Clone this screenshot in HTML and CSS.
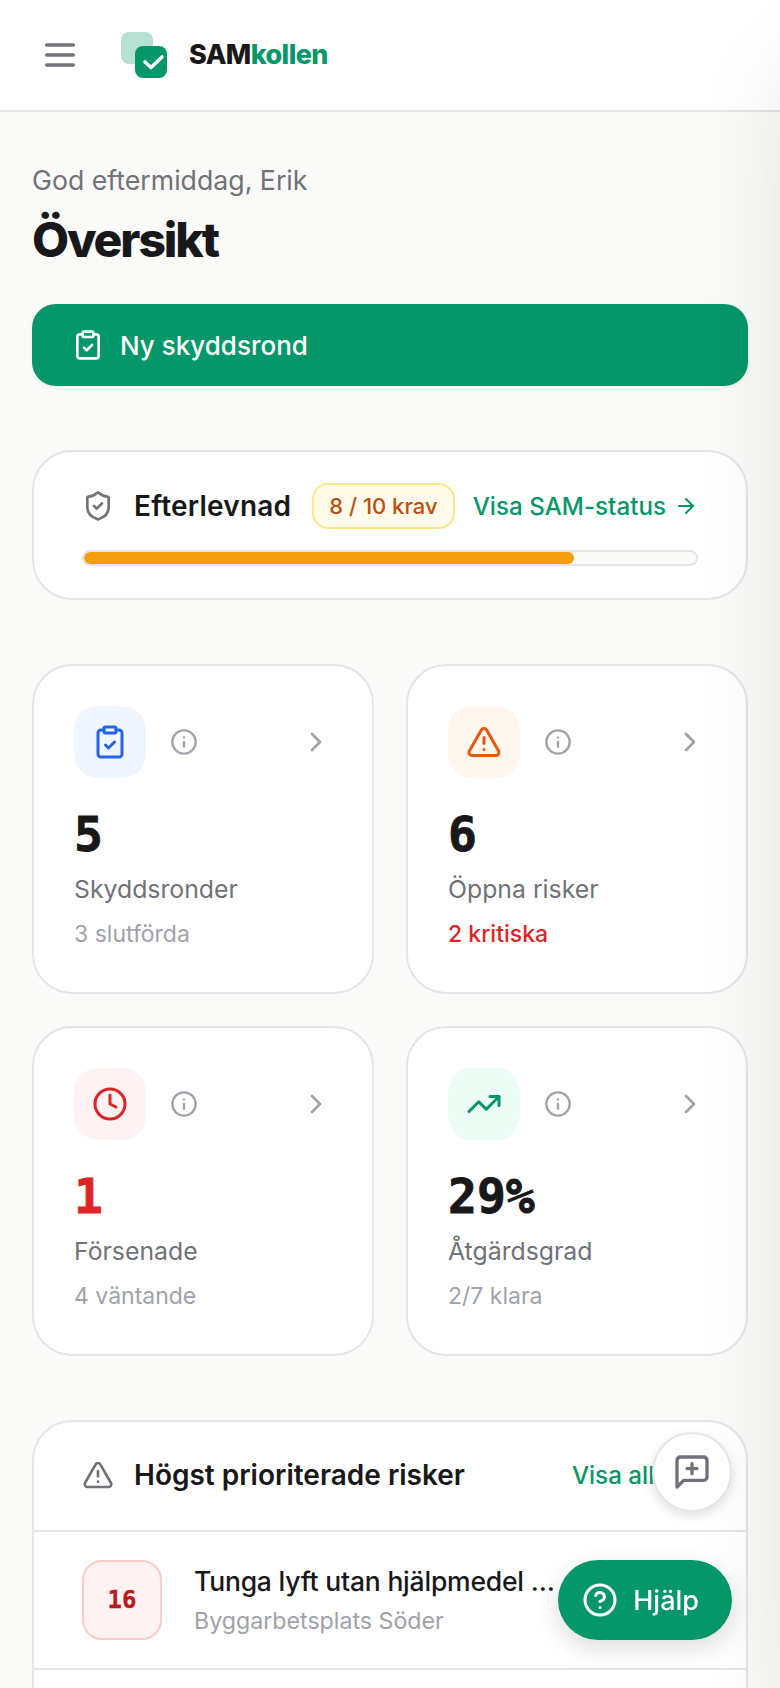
FILE: index.html
```html
<!DOCTYPE html>
<html lang="sv">
<head>
    <meta charset="UTF-8">
    <meta name="viewport" content="width=device-width, initial-scale=1.0">
    <title>Översikt | SAMkollen</title>
    <link rel="stylesheet" href="styles.css">
</head>
<body>
    <header class="top-bar">
        <button class="menu-btn" aria-label="Meny">
            <svg class="icon icon-40" viewBox="0 0 24 24"><path d="M4 12h16"/><path d="M4 6h16"/><path d="M4 18h16"/></svg>
        </button>
        <a class="logo" href="#">
            <svg class="logo-mark" viewBox="0 0 46 46">
                <rect width="32" height="32" rx="8" fill="#b5e0d2"/>
                <rect x="14" y="14" width="32" height="32" rx="8" fill="#059669"/>
                <path d="M24 30l6 5.5 11-10.5" fill="none" stroke="#fff" stroke-width="3.6" stroke-linecap="round" stroke-linejoin="round"/>
            </svg>
            <span class="logo-text">SAM<span class="logo-accent">kollen</span></span>
        </a>
    </header>

    <main class="page">
        <p class="greeting">God eftermiddag, Erik</p>
        <h1 class="page-title">Översikt</h1>

        <button class="primary-btn">
            <svg class="icon icon-32" viewBox="0 0 24 24"><rect x="8" y="2" width="8" height="4" rx="1"/><path d="M16 4h2a2 2 0 0 1 2 2v14a2 2 0 0 1-2 2H6a2 2 0 0 1-2-2V6a2 2 0 0 1 2-2h2"/><path d="m9 14 2 2 4-4"/></svg>
            Ny skyddsrond
        </button>

        <section class="card compliance">
            <div class="compliance-head">
                <svg class="icon icon-32 muted" viewBox="0 0 24 24"><path d="M20 13c0 5-3.5 7.5-7.66 8.95a1 1 0 0 1-.67-.01C7.5 20.5 4 18 4 13V6a1 1 0 0 1 1-1c2 0 4.5-1.2 6.24-2.72a1.17 1.17 0 0 1 1.52 0C14.51 3.81 17 5 19 5a1 1 0 0 1 1 1z"/><path d="m9 12 2 2 4-4"/></svg>
                <h2 class="compliance-title">Efterlevnad</h2>
                <span class="pill">8 / 10 krav</span>
                <a class="link status-link" href="#">Visa SAM-status
                    <svg class="icon icon-24" viewBox="0 0 24 24"><path d="M5 12h14"/><path d="m12 5 7 7-7 7"/></svg>
                </a>
            </div>
            <div class="progress"><div class="progress-fill" style="width: 80%"></div></div>
        </section>

        <section class="stats">
            <a class="card stat" href="#">
                <div class="stat-top">
                    <span class="stat-icon bg-blue">
                        <svg class="icon icon-36" viewBox="0 0 24 24"><rect x="8" y="2" width="8" height="4" rx="1"/><path d="M16 4h2a2 2 0 0 1 2 2v14a2 2 0 0 1-2 2H6a2 2 0 0 1-2-2V6a2 2 0 0 1 2-2h2"/><path d="m9 14 2 2 4-4"/></svg>
                    </span>
                    <svg class="icon icon-28 info" viewBox="0 0 24 24"><circle cx="12" cy="12" r="10"/><path d="M12 16v-4"/><path d="M12 8h.01"/></svg>
                    <svg class="icon icon-32 chevron" viewBox="0 0 24 24"><path d="m9 18 6-6-6-6"/></svg>
                </div>
                <div class="stat-value">5</div>
                <div class="stat-label">Skyddsronder</div>
                <div class="stat-sub">3 slutförda</div>
            </a>
            <a class="card stat" href="#">
                <div class="stat-top">
                    <span class="stat-icon bg-orange">
                        <svg class="icon icon-36" viewBox="0 0 24 24"><path d="m21.73 18-8-14a2 2 0 0 0-3.48 0l-8 14A2 2 0 0 0 4 21h16a2 2 0 0 0 1.73-3"/><path d="M12 9v4"/><path d="M12 17h.01"/></svg>
                    </span>
                    <svg class="icon icon-28 info" viewBox="0 0 24 24"><circle cx="12" cy="12" r="10"/><path d="M12 16v-4"/><path d="M12 8h.01"/></svg>
                    <svg class="icon icon-32 chevron" viewBox="0 0 24 24"><path d="m9 18 6-6-6-6"/></svg>
                </div>
                <div class="stat-value">6</div>
                <div class="stat-label">Öppna risker</div>
                <div class="stat-sub critical">2 kritiska</div>
            </a>
            <a class="card stat" href="#">
                <div class="stat-top">
                    <span class="stat-icon bg-red">
                        <svg class="icon icon-36" viewBox="0 0 24 24"><circle cx="12" cy="12" r="10"/><path d="M12 6v6l4 2"/></svg>
                    </span>
                    <svg class="icon icon-28 info" viewBox="0 0 24 24"><circle cx="12" cy="12" r="10"/><path d="M12 16v-4"/><path d="M12 8h.01"/></svg>
                    <svg class="icon icon-32 chevron" viewBox="0 0 24 24"><path d="m9 18 6-6-6-6"/></svg>
                </div>
                <div class="stat-value danger">1</div>
                <div class="stat-label">Försenade</div>
                <div class="stat-sub">4 väntande</div>
            </a>
            <a class="card stat" href="#">
                <div class="stat-top">
                    <span class="stat-icon bg-green">
                        <svg class="icon icon-36" viewBox="0 0 24 24"><path d="M22 7 13.5 15.5 8.5 10.5 2 17"/><path d="M16 7h6v6"/></svg>
                    </span>
                    <svg class="icon icon-28 info" viewBox="0 0 24 24"><circle cx="12" cy="12" r="10"/><path d="M12 16v-4"/><path d="M12 8h.01"/></svg>
                    <svg class="icon icon-32 chevron" viewBox="0 0 24 24"><path d="m9 18 6-6-6-6"/></svg>
                </div>
                <div class="stat-value">29%</div>
                <div class="stat-label">Åtgärdsgrad</div>
                <div class="stat-sub">2/7 klara</div>
            </a>
        </section>

        <section class="card risks">
            <div class="risks-head">
                <svg class="icon icon-32 muted" viewBox="0 0 24 24"><path d="m21.73 18-8-14a2 2 0 0 0-3.48 0l-8 14A2 2 0 0 0 4 21h16a2 2 0 0 0 1.73-3"/><path d="M12 9v4"/><path d="M12 17h.01"/></svg>
                <h2 class="risks-title">Högst prioriterade risker</h2>
                <a class="link all-link" href="#">Visa alla
                    <svg class="icon icon-24" viewBox="0 0 24 24"><path d="M5 12h14"/><path d="m12 5 7 7-7 7"/></svg>
                </a>
            </div>
            <div class="risk-row">
                <span class="risk-score">16</span>
                <div class="risk-text">
                    <div class="risk-name">Tunga lyft utan hjälpmedel vid materialhantering</div>
                    <div class="risk-place">Byggarbetsplats Söder</div>
                </div>
            </div>
            <div class="risk-row"></div>
        </section>
    </main>

    <div class="offscreen-panel"></div>

    <button class="feedback-btn" aria-label="Lämna feedback">
        <svg class="icon icon-40" viewBox="0 0 24 24"><path d="M21 15a2 2 0 0 1-2 2H7l-4 4V5a2 2 0 0 1 2-2h14a2 2 0 0 1 2 2z"/><path d="M12 7v6"/><path d="M9 10h6"/></svg>
    </button>
    <button class="help-btn">
        <svg class="icon icon-36" viewBox="0 0 24 24"><circle cx="12" cy="12" r="10"/><path d="M9.09 9a3 3 0 0 1 5.83 1c0 2-3 3-3 3"/><path d="M12 17h.01"/></svg>
        Hjälp
    </button>
</body>
</html>
```

FILE: styles.css
```css
:root {
    --green: #059669;
    --text: #18181b;
    --muted: #71717a;
    --faint: #a1a1aa;
    --line: #e5e5e5;
    --bg: #fafaf8;
    --mono: "DejaVu Sans Mono", monospace;
}

* {
    margin: 0;
    padding: 0;
    box-sizing: border-box;
}

html, body {
    height: 1688px;
    overflow: hidden;
}

body {
    background: var(--bg);
    color: var(--text);
    font-family: Inter, "Noto Sans", sans-serif;
}

a {
    color: inherit;
    text-decoration: none;
}

button {
    border: none;
    font-family: inherit;
    cursor: pointer;
}

.icon {
    display: block;
    flex-shrink: 0;
    fill: none;
    stroke: currentColor;
    stroke-width: 2;
    stroke-linecap: round;
    stroke-linejoin: round;
}

.icon-24 { width: 24px; height: 24px; }
.icon-28 { width: 28px; height: 28px; }
.icon-32 { width: 32px; height: 32px; }
.icon-36 { width: 36px; height: 36px; }
.icon-40 { width: 40px; height: 40px; }

.muted { color: var(--muted); }

/* Top bar */
.top-bar {
    height: 112px;
    background: #fff;
    border-bottom: 2px solid var(--line);
    display: flex;
    align-items: center;
    padding-left: 40px;
    gap: 41px;
}

.menu-btn {
    background: none;
    color: var(--muted);
}

.logo {
    display: flex;
    align-items: center;
    gap: 22px;
}

.logo-mark {
    width: 46px;
    height: 46px;
}

.logo-text {
    font-size: 27px;
    font-weight: 800;
    letter-spacing: -0.6px;
    margin-top: -2px;
}

.logo-accent { color: var(--green); }

/* Page */
.page {
    padding: 48px 32px 0;
}

.greeting {
    font-size: 26.7px;
    line-height: 40px;
    color: var(--muted);
}

.page-title {
    font-size: 48px;
    line-height: 64px;
    font-weight: 800;
    letter-spacing: -2.1px;
    margin-top: 8px;
}

.primary-btn {
    width: 100%;
    height: 82px;
    margin-top: 32px;
    padding-left: 40px;
    display: flex;
    align-items: center;
    gap: 16px;
    background: var(--green);
    color: #fff;
    font-size: 26px;
    font-weight: 500;
    border-radius: 24px;
    box-shadow: 0 2px 4px rgba(0, 0, 0, 0.05);
}

.card {
    background: #fff;
    border: 2px solid var(--line);
    border-radius: 40px;
}

/* Efterlevnad */
.compliance {
    margin-top: 64px;
    height: 150px;
    padding: 31px 48px 0;
}

.compliance-head {
    display: flex;
    align-items: center;
    height: 46px;
}

.compliance-title {
    font-size: 28px;
    font-weight: 600;
    letter-spacing: 0.2px;
    margin-left: 20px;
}

.pill {
    margin-left: 21px;
    height: 46px;
    padding: 0 15px;
    display: flex;
    align-items: center;
    font-size: 22px;
    font-weight: 500;
    color: #b8500f;
    background: #fffbeb;
    border: 2px solid #fde68a;
    border-radius: 16px;
}

.link {
    color: var(--green);
    font-size: 24.2px;
    font-weight: 500;
}

.status-link {
    margin-left: auto;
    display: flex;
    align-items: center;
    gap: 8px;
    white-space: nowrap;
}

.progress {
    height: 16px;
    margin-top: 21px;
    background: var(--bg);
    border: 2px solid var(--line);
    border-radius: 8px;
    overflow: hidden;
}

.progress-fill {
    height: 100%;
    background: #f59e0b;
    border-radius: 6px;
}

/* Stat cards */
.stats {
    margin-top: 64px;
    display: grid;
    grid-template-columns: 1fr 1fr;
    gap: 32px;
}

.stat {
    display: block;
    height: 330px;
    padding: 40px;
}

.stat-top {
    display: flex;
    align-items: center;
    gap: 24px;
}

.stat-icon {
    width: 72px;
    height: 72px;
    border-radius: 24px;
    display: flex;
    align-items: center;
    justify-content: center;
}

.bg-blue { background: #eff6ff; color: #2563eb; }
.bg-orange { background: #fff7ed; color: #ea580c; }
.bg-red { background: #fef2f2; color: #dc2626; }
.bg-green { background: #ecfdf5; color: var(--green); }

.info { color: var(--faint); }

.chevron {
    margin-left: auto;
    color: var(--faint);
}

.stat-value {
    margin-top: 24px;
    font-family: var(--mono);
    font-size: 48px;
    font-weight: 700;
    line-height: 64px;
    -webkit-text-stroke: 0.9px currentColor;
}

.danger { color: #dc2626; }

.stat-label {
    margin-top: 3px;
    font-size: 24.8px;
    line-height: 40px;
    color: var(--muted);
}

.stat-sub {
    margin-top: 7px;
    font-size: 23px;
    line-height: 36px;
    color: var(--faint);
}

.critical {
    color: #dc2626;
    font-weight: 500;
}

/* Risks */
.risks {
    margin-top: 64px;
    overflow: hidden;
}

.risks-head {
    height: 110px;
    padding: 0 48px 2px;
    display: flex;
    align-items: center;
    border-bottom: 2px solid var(--line);
}

.risks-title {
    font-size: 28px;
    font-weight: 600;
    margin-left: 20px;
    white-space: nowrap;
}

.all-link {
    margin-left: auto;
    display: flex;
    align-items: center;
    gap: 6px;
    white-space: nowrap;
}

.risk-row {
    height: 138px;
    padding: 0 48px;
    display: flex;
    align-items: center;
    gap: 32px;
    border-bottom: 2px solid var(--line);
}

.risk-score {
    width: 80px;
    height: 80px;
    flex-shrink: 0;
    display: flex;
    align-items: center;
    justify-content: center;
    font-family: var(--mono);
    font-size: 24px;
    font-weight: 700;
    -webkit-text-stroke: 0.3px currentColor;
    color: #b91c1c;
    background: #fef2f2;
    border: 2px solid #fecaca;
    border-radius: 20px;
}

.risk-text {
    width: 364px;
}

.risk-name {
    font-size: 26.5px;
    line-height: 40px;
    font-weight: 500;
    letter-spacing: -0.2px;
    white-space: nowrap;
    overflow: hidden;
    text-overflow: ellipsis;
}

.risk-place {
    margin-top: 2px;
    font-size: 23.2px;
    line-height: 36px;
    color: var(--faint);
}

/* Floating things */
.offscreen-panel {
    position: fixed;
    top: 0;
    bottom: 0;
    left: 780px;
    width: 640px;
    background: #fff;
    box-shadow: 0 50px 100px -24px rgba(0, 0, 0, 0.15);
}

.feedback-btn {
    position: fixed;
    right: 48px;
    bottom: 176px;
    width: 80px;
    height: 80px;
    display: flex;
    align-items: center;
    justify-content: center;
    background: #fff;
    color: var(--muted);
    border: 2px solid var(--line);
    border-radius: 50%;
    box-shadow: 0 4px 12px rgba(0, 0, 0, 0.12);
}

.help-btn {
    position: fixed;
    right: 48px;
    bottom: 48px;
    height: 80px;
    padding: 0 33px 0 24px;
    display: flex;
    align-items: center;
    gap: 15px;
    background: var(--green);
    color: #fff;
    font-size: 27px;
    font-weight: 500;
    border-radius: 40px;
    box-shadow: 0 8px 24px rgba(0, 0, 0, 0.14);
}
```
